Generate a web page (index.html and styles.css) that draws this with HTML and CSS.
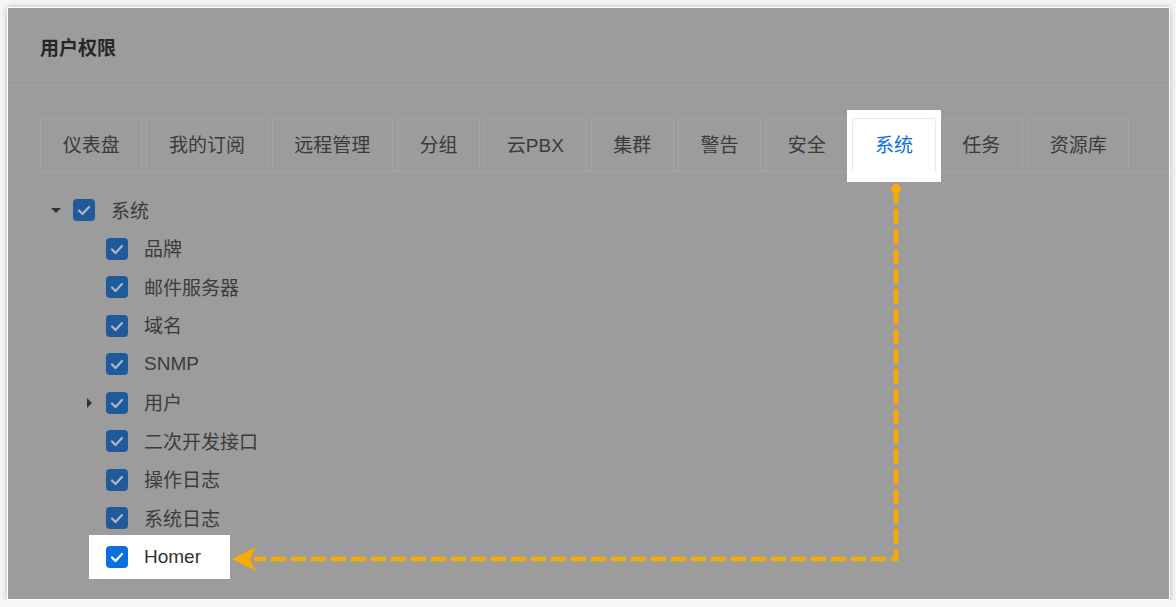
FILE: index.html
```html
<!DOCTYPE html>
<html lang="zh-CN">
<head>
    <meta charset="UTF-8">
    <title>用户权限</title>
    <link rel="stylesheet" href="styles.css">
</head>
<body>
    <div class="dialog">
        <div class="dialog-header">用户权限</div>
        <div class="dialog-body">
            <div class="tabs">
                <div class="tab">仪表盘</div>
                <div class="tab">我的订阅</div>
                <div class="tab">远程管理</div>
                <div class="tab">分组</div>
                <div class="tab">云PBX</div>
                <div class="tab">集群</div>
                <div class="tab">警告</div>
                <div class="tab">安全</div>
                <div class="spot spot-tab">
                    <div class="tab tab-active">系统</div>
                </div>
                <div class="tab">任务</div>
                <div class="tab">资源库</div>
            </div>
            <ul class="tree">
                <li class="node level-0">
                    <span class="caret caret-down"></span>
                    <span class="check"><svg viewBox="0 0 22 22"><polyline points="6,11.5 9.5,15 16,8"/></svg></span>
                    <span class="label">系统</span>
                </li>
                <li class="node level-1">
                    <span class="caret"></span>
                    <span class="check"><svg viewBox="0 0 22 22"><polyline points="6,11.5 9.5,15 16,8"/></svg></span>
                    <span class="label">品牌</span>
                </li>
                <li class="node level-1">
                    <span class="caret"></span>
                    <span class="check"><svg viewBox="0 0 22 22"><polyline points="6,11.5 9.5,15 16,8"/></svg></span>
                    <span class="label">邮件服务器</span>
                </li>
                <li class="node level-1">
                    <span class="caret"></span>
                    <span class="check"><svg viewBox="0 0 22 22"><polyline points="6,11.5 9.5,15 16,8"/></svg></span>
                    <span class="label">域名</span>
                </li>
                <li class="node level-1">
                    <span class="caret"></span>
                    <span class="check"><svg viewBox="0 0 22 22"><polyline points="6,11.5 9.5,15 16,8"/></svg></span>
                    <span class="label latin">SNMP</span>
                </li>
                <li class="node level-1">
                    <span class="caret caret-right"></span>
                    <span class="check"><svg viewBox="0 0 22 22"><polyline points="6,11.5 9.5,15 16,8"/></svg></span>
                    <span class="label">用户</span>
                </li>
                <li class="node level-1">
                    <span class="caret"></span>
                    <span class="check"><svg viewBox="0 0 22 22"><polyline points="6,11.5 9.5,15 16,8"/></svg></span>
                    <span class="label">二次开发接口</span>
                </li>
                <li class="node level-1">
                    <span class="caret"></span>
                    <span class="check"><svg viewBox="0 0 22 22"><polyline points="6,11.5 9.5,15 16,8"/></svg></span>
                    <span class="label">操作日志</span>
                </li>
                <li class="node level-1">
                    <span class="caret"></span>
                    <span class="check"><svg viewBox="0 0 22 22"><polyline points="6,11.5 9.5,15 16,8"/></svg></span>
                    <span class="label">系统日志</span>
                </li>
                <li class="node level-1">
                    <span class="caret"></span>
                    <span class="spot spot-row">
                        <span class="check check-on"><svg viewBox="0 0 22 22"><polyline points="6,11.5 9.5,15 16,8"/></svg></span>
                        <span class="label latin">Homer</span>
                    </span>
                </li>
            </ul>
        </div>
        <!-- annotation: tab -> new item -->
        <svg class="callout" viewBox="0 0 1176 607">
            <circle cx="896" cy="189" r="5"/>
            <path class="callout-line" d="M896 189 V559 H254"/>
            <polygon points="232,559 256,547 250,559 256,571"/>
        </svg>
    </div>
</body>
</html>
```

FILE: styles.css
```css
html, body {
    margin: 0;
    padding: 0;
    background-color: #f6f6f6;
    font-family: 'Liberation Sans', 'Noto Sans CJK SC', sans-serif;
    color: #3b3b3b;
}
.dialog {
    position: relative;
    box-sizing: border-box;
    width: 1163px;
    height: 593px;
    margin: 7px 0 0 7px;
    background-color: #9c9c9c;
    border: 1px solid #fff;
    box-shadow: 0 0 6px rgba(0, 0, 0, 0.28);
}
.dialog-header {
    box-sizing: border-box;
    height: 78px;
    padding-left: 32px;
    display: flex;
    align-items: center;
    font-size: 19px;
    font-weight: bold;
    color: #262626;
    border-bottom: 1px solid #a3a3a3;
}
.dialog-body {
    padding: 32px 0 0 32px;
}
.tabs {
    display: flex;
    align-items: flex-end;
    gap: 4px;
    border-bottom: 1px solid #a5a5a5;
}
.tab {
    box-sizing: border-box;
    height: 53px;
    padding: 0 21.65px 4px;
    display: flex;
    align-items: center;
    justify-content: center;
    font-size: 19px;
    color: #3b3b3b;
    border: 1px solid #a5a5a5;
    border-bottom: none;
    border-radius: 4px 4px 0 0;
    white-space: nowrap;
}
.spot {
    background-color: #fff;
}
.spot-tab {
    padding: 8px 5px 11px;
    margin: -8px -5px -11px;
    position: relative;
}
.tab-active {
    color: #0a6fe0;
    border-color: #e8e8e8;
}
.tree {
    list-style: none;
    margin: 19px 0 0;
    padding: 0;
}
.node {
    height: 38.5px;
    display: flex;
    align-items: center;
    font-size: 19px;
}
.label {
    position: relative;
    top: -1px;
}
.label.latin {
    top: 0;
}
.level-0 {
    padding-left: 8px;
}
.level-1 {
    padding-left: 41px;
}
.caret {
    width: 16px;
    height: 16px;
    margin-right: 9px;
    display: flex;
    align-items: center;
    justify-content: center;
}
.caret-down::before {
    content: '';
    border-left: 5px solid transparent;
    border-right: 5px solid transparent;
    border-top: 5.5px solid #333;
}
.caret-right::before {
    content: '';
    border-top: 5px solid transparent;
    border-bottom: 5px solid transparent;
    border-left: 5.5px solid #333;
}
.check {
    width: 22px;
    height: 22px;
    margin-right: 16px;
    border-radius: 4px;
    background-color: #1f5a9b;
    display: flex;
}
.check svg {
    width: 22px;
    height: 22px;
    fill: none;
    stroke: #aeb8c4;
    stroke-width: 2.2;
    stroke-linecap: round;
    stroke-linejoin: round;
}
.check-on {
    background-color: #0a6fe0;
}
.check-on svg {
    stroke: #fff;
}
.spot-row {
    display: flex;
    align-items: center;
    padding: 11px 29px 11px 17px;
    margin: -11px -29px -11px -17px;
}
.spot-row .label {
    color: #303133;
}
.callout {
    position: absolute;
    left: -8px;
    top: -8px;
    width: 1176px;
    height: 607px;
    pointer-events: none;
    fill: #f7aa00;
}
.callout-line {
    fill: none;
    stroke: #f7aa00;
    stroke-width: 4.5;
    stroke-dasharray: 15 5;
}
```
